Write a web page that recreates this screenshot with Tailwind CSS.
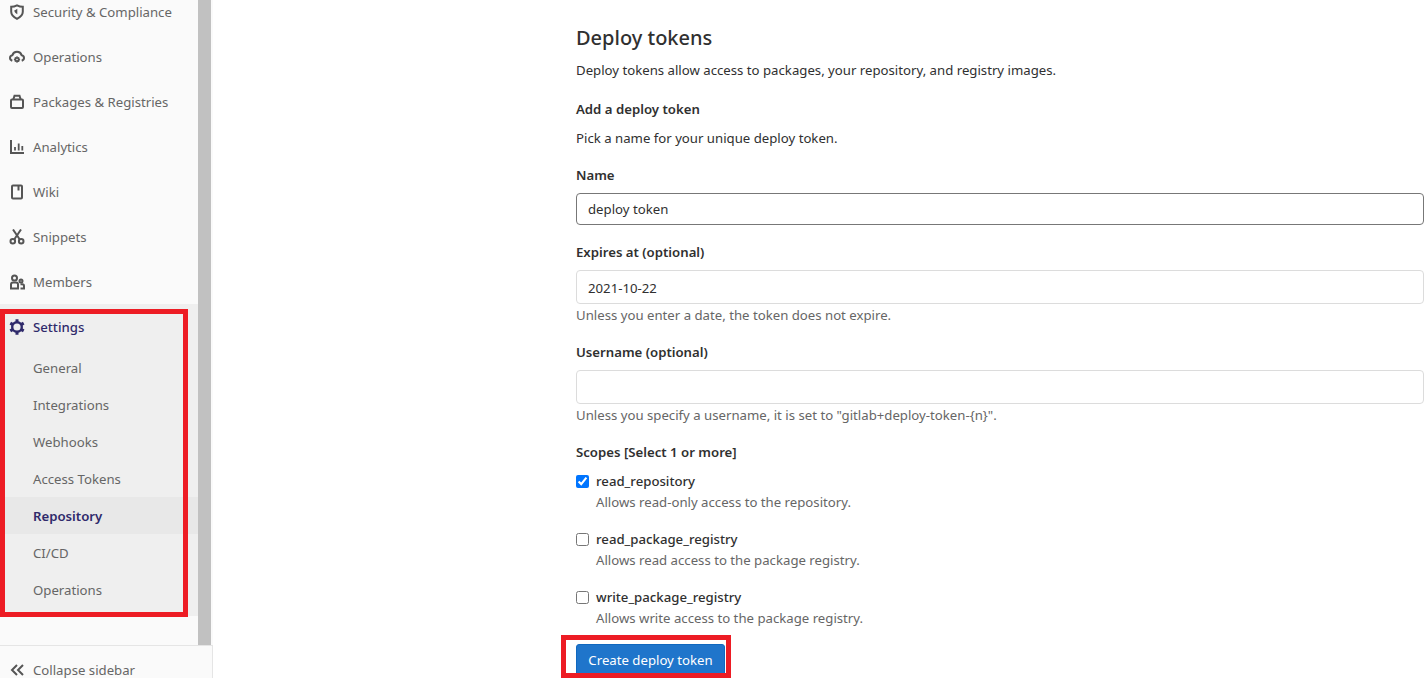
<!DOCTYPE html>
<html lang="en">
<head>
    <meta charset="UTF-8">
    <title>Repository settings</title>
    <script src="https://cdn.jsdelivr.net/npm/@tailwindcss/browser@4"></script>
</head>
<body class="bg-white font-['Noto_Sans',sans-serif] text-[13.2px] text-[#303030]">
    <div class="relative flex h-[678px] overflow-hidden">
        <!-- Sidebar -->
        <aside class="flex h-[694px] w-[213px] shrink-0 flex-col bg-[#fafafa] text-[#666]">
            <div class="flex min-h-0 flex-1">
                <nav class="-mt-[11px] w-[198px]">
                    <a class="flex h-[45px] items-center gap-2 pl-[9px]">
                        <svg class="h-4 w-4" viewBox="0 0 16 16" fill="none" stroke="#555" stroke-width="2"><path d="M8 1.300c1.900 1 3.900 1.500 5.800 1.500v5c0 3-2.400 5.400-5.800 7-3.400-1.600-5.800-4-5.800-7v-5c1.900 0 3.900-.5 5.800-1.500z"/><path d="M8.300 4.700v5.600C6.700 9.500 5.600 8.300 5.200 6.500c1.100-.3 2.200-1 3.100-1.800z" fill="#555" stroke="none"/></svg>
                        <span class="pt-[2px]">Security &amp; Compliance</span>
                    </a>
                    <a class="flex h-[45px] items-center gap-2 pl-[9px]">
                        <svg class="h-4 w-4" viewBox="0 0 16 16" fill="none" stroke="#555" stroke-width="2"><path d="M3.300 11.800C1.900 11.300 1 10.200 1 9c0-1.400 1-2.600 2.400-2.800C4 4.200 5.800 2.800 8 2.800s4 1.400 4.600 3.400C14 6.400 15 7.600 15 9c0 1.200-.9 2.300-2.300 2.800"/><circle cx="8" cy="10.500" r="1.700" stroke-width="1.800"/><path d="M8 7.300v1.200M8 12.500v1.200M4.900 10.500h1.200M9.900 10.500h1.200M5.900 8.400l.8.800M9.300 11.800l.8.800M10.100 8.400l-.8.800M6.700 11.800l-.8.800" stroke-width="1.300"/></svg>
                        <span class="pt-[2px]">Operations</span>
                    </a>
                    <a class="flex h-[45px] items-center gap-2 pl-[9px]">
                        <svg class="h-4 w-4" viewBox="0 0 16 16" fill="none" stroke="#555" stroke-width="2"><rect x="2" y="5.500" width="12" height="8.500" rx="1"/><path d="M4.300 5.500l1.200-3.700h5l1.200 3.700"/></svg>
                        <span class="pt-[2px]">Packages &amp; Registries</span>
                    </a>
                    <a class="flex h-[45px] items-center gap-2 pl-[9px]">
                        <svg class="h-4 w-4" viewBox="0 0 16 16" fill="none" stroke="#555" stroke-width="2"><path d="M2 1v13h13"/><path d="M6 8v3.500M9.700 4.500v7M13.300 7v4.500" stroke-width="1.800"/></svg>
                        <span class="pt-[2px]">Analytics</span>
                    </a>
                    <a class="flex h-[45px] items-center gap-2 pl-[9px]">
                        <svg class="h-4 w-4" viewBox="0 0 16 16" fill="none" stroke="#555" stroke-width="2"><rect x="3" y="1.500" width="10" height="13" rx="1"/><path d="M9.500 1.500v5"/></svg>
                        <span class="pt-[2px]">Wiki</span>
                    </a>
                    <a class="flex h-[45px] items-center gap-2 pl-[9px]">
                        <svg class="h-4 w-4" viewBox="0 0 16 16" fill="none" stroke="#555" stroke-width="2"><circle cx="3.800" cy="12.300" r="2.300"/><circle cx="12.200" cy="12.300" r="2.300"/><path d="M5.200 10.500L12 .5M10.800 10.500L4 .5"/></svg>
                        <span class="pt-[2px]">Snippets</span>
                    </a>
                    <a class="flex h-[45px] items-center gap-2 pl-[9px]">
                        <svg class="h-4 w-4" viewBox="0 0 16 16" fill="none" stroke="#555" stroke-width="2"><circle cx="5.500" cy="4" r="2.500"/><path d="M2 14.500v-4c0-1.200.8-2 2-2h3c1.200 0 2 .8 2 2v4z"/><circle cx="12" cy="7" r="1.500"/><path d="M11.500 14.500H15V12c0-1-.7-1.700-1.700-1.700h-1.800"/></svg>
                        <span class="pt-[2px]">Members</span>
                    </a>
                    <div class="h-[312px] bg-[#efefef]">
                        <a class="flex h-[45px] items-center gap-2 pl-[9px] font-medium text-[#2f2a6b]">
                            <svg class="h-4 w-4" viewBox="0 0 16 16" fill="none" stroke="#2f2a6b"><circle cx="8" cy="8" r="4.800" stroke-width="2.400"/><path d="M8 .3v3M8 12.700v3M1.300 4.100l2.600 1.500M12.100 10.400l2.600 1.500M14.700 4.100l-2.600 1.500M3.900 10.400l-2.600 1.500" stroke-width="3"/></svg>
                            <span class="pt-[2px]">Settings</span>
                        </a>
                        <a class="flex h-[37px] items-center pt-[2px] pl-[33px]">General</a>
                        <a class="flex h-[37px] items-center pt-[2px] pl-[33px]">Integrations</a>
                        <a class="flex h-[37px] items-center pt-[2px] pl-[33px]">Webhooks</a>
                        <a class="flex h-[37px] items-center pt-[2px] pl-[33px]">Access Tokens</a>
                        <a class="flex h-[37px] items-center bg-[#e8e8e8] pt-[2px] pl-[33px] font-semibold text-[#2f2a6b]">Repository</a>
                        <a class="flex h-[37px] items-center pt-[2px] pl-[33px]">CI/CD</a>
                        <a class="flex h-[37px] items-center pt-[2px] pl-[33px]">Operations</a>
                    </div>
                </nav>
                <div class="w-[15px] bg-[#fafafa]">
                    <div class="h-full w-[13px] bg-[#c1c1c1]"></div>
                </div>
            </div>
            <div class="flex h-[49px] shrink-0 items-center gap-2 border-t border-r border-[#e5e5e5] pl-[9px]">
                <svg class="h-4 w-4" viewBox="0 0 16 16" fill="none" stroke="#555" stroke-width="2"><path d="M8 3L3 8l5 5M14 3L9 8l5 5"/></svg>
                <span class="pt-[2px]">Collapse sidebar</span>
            </div>
        </aside>

        <!-- Deploy tokens form -->
        <main class="ml-[363px] w-[848px] shrink-0 pt-[24px]">
            <h4 class="h-[28px] text-[20px] leading-[28px] font-medium">Deploy tokens</h4>
            <p class="mt-2 h-5 leading-5">Deploy tokens allow access to packages, your repository, and registry images.</p>
            <h5 class="mt-[19px] h-5 leading-5 font-semibold">Add a deploy token</h5>
            <p class="mt-[9px] h-5 leading-5">Pick a name for your unique deploy token.</p>

            <label class="mt-[17px] block h-5 leading-5 font-semibold">Name</label>
            <input class="mt-2 block h-[32px] w-full rounded border border-[#777] px-[11px] outline-none" value="deploy token">

            <label class="mt-[17px] block h-5 leading-5 font-semibold">Expires at (optional)</label>
            <input class="mt-2 block h-[34px] w-full rounded border border-[#dcdcdc] px-[11px] pt-[2px] outline-none" value="2021-10-22">
            <p class="mt-px h-5 leading-5 text-[#666]">Unless you enter a date, the token does not expire.</p>

            <label class="mt-[17px] block h-5 leading-5 font-semibold">Username (optional)</label>
            <input class="mt-2 block h-[34px] w-full rounded border border-[#dcdcdc] px-[11px] outline-none">
            <p class="mt-px h-5 leading-5 text-[#666]">Unless you specify a username, it is set to "gitlab+deploy-token-{n}".</p>

            <p class="mt-[17px] h-5 leading-5 font-semibold">Scopes [Select 1 or more]</p>
            <label class="mt-[9px] flex h-5 items-center gap-[7px] leading-5 font-medium">
                <input type="checkbox" checked class="m-0 h-[13px] w-[13px]">read_repository
            </label>
            <p class="mt-px h-5 pl-5 leading-5 text-[#666]">Allows read-only access to the repository.</p>
            <label class="mt-[17px] flex h-5 items-center gap-[7px] leading-5 font-medium">
                <input type="checkbox" class="m-0 h-[13px] w-[13px]">read_package_registry
            </label>
            <p class="mt-px h-5 pl-5 leading-5 text-[#666]">Allows read access to the package registry.</p>
            <label class="mt-[17px] flex h-5 items-center gap-[7px] leading-5 font-medium">
                <input type="checkbox" class="m-0 h-[13px] w-[13px]">write_package_registry
            </label>
            <p class="mt-px h-5 pl-5 leading-5 text-[#666]">Allows write access to the package registry.</p>

            <button class="mt-4 h-[34px] w-[149px] rounded-[3px] border border-[#1068bf] bg-[#1f75cb] text-white">Create deploy token</button>
        </main>

        <!-- Red annotation boxes -->
        <div class="absolute top-[309px] left-0 h-[308px] w-[188px] border-[5px] border-[#ed1c24]"></div>
        <div class="absolute top-[635px] left-[561px] h-[43px] w-[170px] border-[5px] border-[#ed1c24]"></div>
    </div>
</body>
</html>
